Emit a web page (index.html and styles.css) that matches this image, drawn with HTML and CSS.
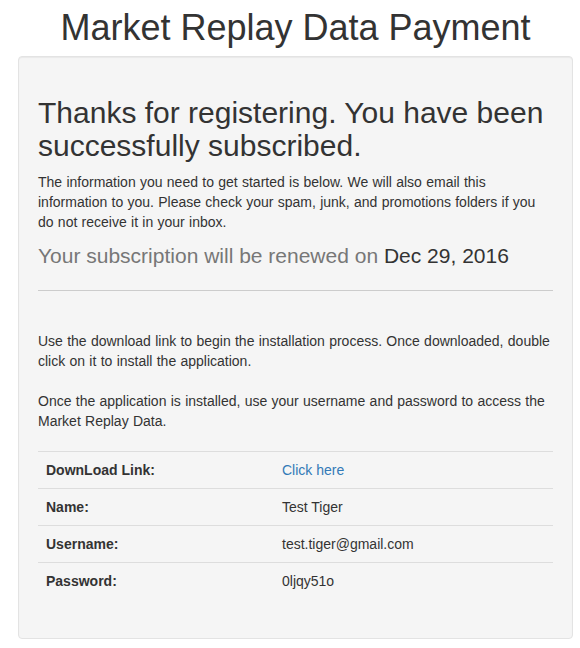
FILE: index.html
```html
<!DOCTYPE html>
<html lang="en">

<head>
    <meta charset="UTF-8">
    <meta name="viewport" content="width=device-width, initial-scale=1.0">
    <title>Market Replay Data Payment</title>
    <link rel="stylesheet" href="styles.css">
</head>

<body>
    <div class="container">
        <h1>Market Replay Data Payment</h1>

        <div class="well">
            <h2>Thanks for registering. You have been successfully subscribed.</h2>
            <p>The information you need to get started is below. We will also email this information to you. Please check your spam, junk, and promotions folders if you do not receive it in your inbox.</p>
            <p class="renewal">Your subscription will be renewed on <span class="renewal-date">Dec 29, 2016</span></p>

            <hr>

            <!-- Install instructions -->
            <div class="section">
                <p class="spaced">Use the download link to begin the installation process. Once downloaded, double click on it to install the application.</p>
                <p class="spaced">Once the application is installed, use your username and password to access the Market Replay Data.</p>

                <table>
                    <tbody>
                        <tr>
                            <th>DownLoad Link:</th>
                            <td><a href="#">Click here</a></td>
                        </tr>
                        <tr>
                            <th>Name:</th>
                            <td>Test Tiger</td>
                        </tr>
                        <tr>
                            <th>Username:</th>
                            <td>test.tiger@gmail.com</td>
                        </tr>
                        <tr>
                            <th>Password:</th>
                            <td>0ljqy51o</td>
                        </tr>
                    </tbody>
                </table>
            </div>
        </div>
    </div>
</body>

</html>
```

FILE: styles.css
```css
* {
    box-sizing: border-box;
}

body {
    font-family: "Liberation Sans", Arial, Helvetica, sans-serif;
    font-size: 14px;
    line-height: 20px;
    color: #333;
    background-color: #fff;
    margin: 0;
}

.container {
    padding: 8px 7px 0 18px;
}

h1 {
    margin: 0 0 8px;
    font-size: 36px;
    font-weight: 500;
    line-height: 1.1;
    text-align: center;
}

.well {
    background-color: #f5f5f5;
    border: 1px solid #e3e3e3;
    border-radius: 4px;
    box-shadow: inset 0 1px 1px rgba(0, 0, 0, 0.05);
    padding: 19px;
}

h2 {
    margin: 20px 0 10px;
    font-size: 30px;
    font-weight: 500;
    line-height: 1.1;
}

p {
    margin: 0 0 10px;
    word-spacing: 0.4px;
}

.renewal {
    margin: 0;
    font-size: 21px;
    line-height: 28px;
    word-spacing: 0;
    color: #777;
}

.renewal-date {
    color: #333;
}

hr {
    margin: 20px 0;
    border: 0;
    border-top: 1px solid #ccc;
}

.section {
    padding-top: 20px;
}

p.spaced {
    margin-bottom: 20px;
}

a {
    color: #337ab7;
    text-decoration: none;
}

table {
    width: 100%;
    border-collapse: collapse;
    margin-bottom: 20px;
}

th,
td {
    padding: 8px;
    text-align: left;
    vertical-align: top;
    border-top: 1px solid #ddd;
}

th {
    width: 236px;
    font-weight: bold;
}
```
